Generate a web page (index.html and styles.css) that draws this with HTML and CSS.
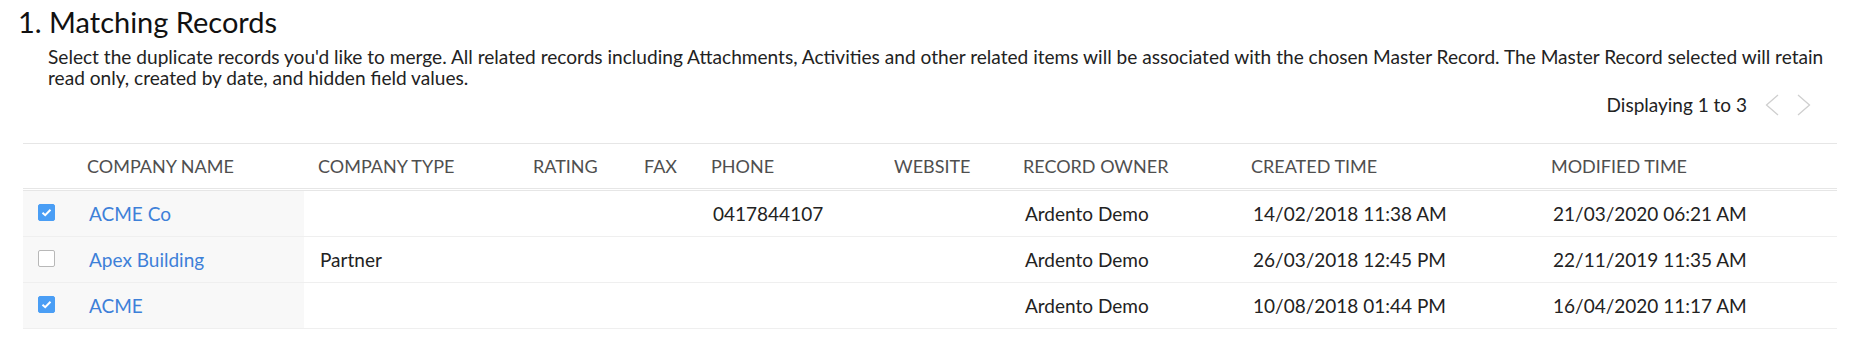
FILE: index.html
```html
<!DOCTYPE html>
<html>
<head>
<meta charset="utf-8">
<link rel="stylesheet" href="styles.css">
</head>
<body>
<div class="page">
  <h1 class="title">1. Matching Records</h1>
  <p class="desc">Select the duplicate records you'd like to merge. All related records including Attachments, Activities and other related items will be associated with the chosen Master Record. The Master Record selected will retain read only, created by date, and hidden field values.</p>
  <div class="pager">
    <span class="pager-text">Displaying 1 to 3</span>
    <svg class="chev" width="14" height="22" viewBox="0 0 14 22"><polyline points="13,1 1.5,11 13,21" fill="none" stroke="#cfcfcf" stroke-width="1.3"/></svg>
    <svg class="chev" width="14" height="22" viewBox="0 0 14 22"><polyline points="1,1 12.5,11 1,21" fill="none" stroke="#cfcfcf" stroke-width="1.3"/></svg>
  </div>
  <div class="table">
    <div class="thead">
      <div class="th"></div>
      <div class="th">COMPANY NAME</div>
      <div class="th">COMPANY TYPE</div>
      <div class="th">RATING</div>
      <div class="th">FAX</div>
      <div class="th">PHONE</div>
      <div class="th">WEBSITE</div>
      <div class="th">RECORD OWNER</div>
      <div class="th">CREATED TIME</div>
      <div class="th">MODIFIED TIME</div>
    </div>
    <div class="tbody">
      <div class="row">
        <div class="td shade cb-cell"><span class="cb checked"><svg width="11" height="9" viewBox="0 0 11 9"><polyline points="1.5,4.8 4.2,7.2 9.5,1.8" fill="none" stroke="#fff" stroke-width="2"/></svg></span></div>
        <div class="td shade"><a class="link">ACME Co</a></div>
        <div class="td"></div>
        <div class="td"></div>
        <div class="td"></div>
        <div class="td">0417844107</div>
        <div class="td"></div>
        <div class="td">Ardento Demo</div>
        <div class="td">14/02/2018 11:38 AM</div>
        <div class="td">21/03/2020 06:21 AM</div>
      </div>
      <div class="row">
        <div class="td shade cb-cell"><span class="cb"></span></div>
        <div class="td shade"><a class="link">Apex Building</a></div>
        <div class="td">Partner</div>
        <div class="td"></div>
        <div class="td"></div>
        <div class="td"></div>
        <div class="td"></div>
        <div class="td">Ardento Demo</div>
        <div class="td">26/03/2018 12:45 PM</div>
        <div class="td">22/11/2019 11:35 AM</div>
      </div>
      <div class="row">
        <div class="td shade cb-cell"><span class="cb checked"><svg width="11" height="9" viewBox="0 0 11 9"><polyline points="1.5,4.8 4.2,7.2 9.5,1.8" fill="none" stroke="#fff" stroke-width="2"/></svg></span></div>
        <div class="td shade"><a class="link">ACME</a></div>
        <div class="td"></div>
        <div class="td"></div>
        <div class="td"></div>
        <div class="td"></div>
        <div class="td"></div>
        <div class="td">Ardento Demo</div>
        <div class="td">10/08/2018 01:44 PM</div>
        <div class="td">16/04/2020 11:17 AM</div>
      </div>
    </div>
  </div>
</div>
</body>
</html>
```
FILE: styles.css
```css
html, body {
  margin: 0;
  padding: 0;
  background: #fff;
}
body {
  font-family: Lato, "Open Sans", sans-serif;
  color: #222;
}
.page {
  padding-top: 2px;
}
.title {
  margin: 0;
  padding-left: 18px;
  font-size: 29px;
  line-height: 40px;
  font-weight: 400;
  color: #111;
}
.desc {
  margin: 4px 0 0 0;
  padding: 0 0 0 48px;
  font-size: 19.1px;
  line-height: 21px;
  color: #222;
}
.pager {
  margin-top: 6px;
  display: flex;
  justify-content: flex-end;
  align-items: center;
  gap: 18px;
  padding-right: 43px;
  height: 22px;
}
.pager-text {
  font-size: 19px;
  line-height: 22px;
  color: #222;
}
.chev {
  display: block;
}
.table {
  margin: 27px 17px 0 23px;
}
.thead, .row {
  display: grid;
  grid-template-columns: 50px 231px 215px 111px 67px 183px 129px 228px 300px 300px;
}
.thead {
  border-top: 1px solid #e6e6e6;
  border-bottom: 1px solid #e6e6e6;
  height: 44px;
  align-items: center;
}
.th {
  padding-left: 14px;
  font-size: 18px;
  color: #4f4f4f;
  white-space: nowrap;
}
.tbody {
  margin-top: 1px;
  border-top: 1px solid #e6e6e6;
}
.row {
  height: 45px;
  border-bottom: 1px solid #efefef;
}
.td {
  display: flex;
  align-items: center;
  padding-left: 16px;
  font-size: 19px;
  color: #222;
  white-space: nowrap;
}
.shade {
  background: #f8f8f8;
}
.cb-cell {
  padding-left: 15px;
}
.cb {
  box-sizing: border-box;
  width: 17px;
  height: 17px;
  border: 1px solid #b8b8b8;
  border-radius: 2px;
  background: #fff;
  display: flex;
  align-items: center;
  justify-content: center;
  margin-top: -2px;
}
.cb.checked {
  background: #4a9ef5;
  border-color: #4a9ef5;
}
.link {
  color: #3d80d8;
  text-decoration: none;
}
```
